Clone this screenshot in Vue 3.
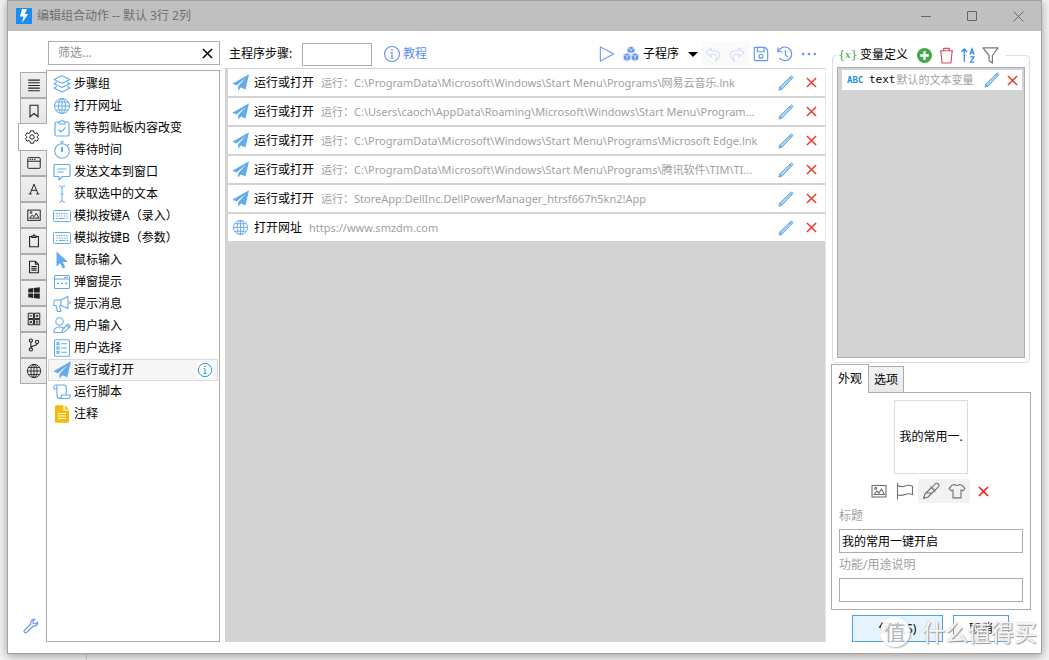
<script setup>
import { ref } from 'vue'

const rail = ['lines', 'bookmark', 'gear', 'window', 'letter', 'image', 'clipboard', 'doc', 'windows', 'calc', 'branch', 'globe']
const railNames = ['全部', '收藏', '常用', '窗口', '文本', '图片', '剪贴板', '文件', '系统', '计算', '流程', '网络']
const activeRail = ref(2)

const modules = [
  { icon: 'layers', name: '步骤组' },
  { icon: 'globe', name: '打开网址' },
  { icon: 'clipcheck', name: '等待剪贴板内容改变' },
  { icon: 'timer', name: '等待时间' },
  { icon: 'message', name: '发送文本到窗口' },
  { icon: 'ibeam', name: '获取选中的文本' },
  { icon: 'keyboard', name: '模拟按键A（录入）' },
  { icon: 'keyboard', name: '模拟按键B（参数）' },
  { icon: 'cursor', name: '鼠标输入' },
  { icon: 'dialog', name: '弹窗提示' },
  { icon: 'horn', name: '提示消息' },
  { icon: 'useredit', name: '用户输入' },
  { icon: 'listbox', name: '用户选择' },
  { icon: 'plane', name: '运行或打开' },
  { icon: 'scroll', name: '运行脚本' },
  { icon: 'note', name: '注释' }
]
const activeModule = ref(13)

const steps = ref([
  { icon: 'plane', name: '运行或打开', detail: '运行：C:\\ProgramData\\Microsoft\\Windows\\Start Menu\\Programs\\网易云音乐.lnk' },
  { icon: 'plane', name: '运行或打开', detail: '运行：C:\\Users\\caoch\\AppData\\Roaming\\Microsoft\\Windows\\Start Menu\\Program...' },
  { icon: 'plane', name: '运行或打开', detail: '运行：C:\\ProgramData\\Microsoft\\Windows\\Start Menu\\Programs\\Microsoft Edge.lnk' },
  { icon: 'plane', name: '运行或打开', detail: '运行：C:\\ProgramData\\Microsoft\\Windows\\Start Menu\\Programs\\腾讯软件\\TIM\\TI...' },
  { icon: 'plane', name: '运行或打开', detail: '运行：StoreApp:DellInc.DellPowerManager_htrsf667h5kn2!App' },
  { icon: 'globe', name: '打开网址', detail: 'https://www.smzdm.com' }
])

const filter = ref('')
const stepName = ref('')
const title = ref('我的常用一键开启')
const usage = ref('')
</script>

<template>
  <svg class="defs" aria-hidden="true">
    <defs>
      <g id="i-lines" fill="none" stroke="currentColor" stroke-width="1.2"><path d="M2.500 3.500h13M2.500 6.500h13M2.500 9.500h13M2.500 12.500h13M2.500 15.500h13" /></g>
      <g id="i-bookmark" fill="none" stroke="currentColor" stroke-width="1.2"><path d="M4.5 2.5h9v13L9 11.8l-4.5 3.7z" /></g>
      <g id="i-gear" fill="none" stroke="currentColor" stroke-width="1.1" stroke-linejoin="round"><path d="M7.3 2h3.400l.5 2.200 1.300.8 2.200-.7 1.700 2.900-1.700 1.500v.6l1.700 1.500-1.700 2.900-2.200-.7-1.300.8-.5 2.200H7.300l-.5-2.200-1.300-.8-2.200.7-1.700-2.900 1.700-1.500v-.6L1.600 7.200l1.700-2.900 2.200.7 1.300-.8z" /><circle cx="9" cy="9" r="2.500" /></g>
      <g id="i-window" fill="none" stroke="currentColor" stroke-width="1.1"><rect x="2" y="3" width="14" height="12" rx="1" /><path d="M2 7h14M4 5h1.500M6.500 5H8M9 5h1.500" /></g>
      <g id="i-letter" fill="none" stroke="currentColor" stroke-width="1.1"><path d="M4.500 14.500L9 3.500l4.500 11M6 10.500h6M3 14.500h3.500M11.500 14.500H15" /></g>
      <g id="i-image" fill="none" stroke="currentColor" stroke-width="1.100"><rect x="2" y="3.500" width="14" height="11.500" /><path d="M4 12.500L7 9l2 2 2.500-4 3 5.500z" /><circle cx="5.700" cy="6.200" r="1" /></g>
      <g id="i-clipboard" fill="none" stroke="currentColor" stroke-width="1.200"><path d="M6.500 4h-2.500v11.500h10V4h-2.500" /><path d="M6.500 5V3.500H8L9 2l1 1.500h1.500V5z" /></g>
      <g id="i-doc" fill="none" stroke="currentColor" stroke-width="1.200"><path d="M4 2.500h6.500L14 6v9.500H4zM10.500 2.500V6H14M6 8.500h6M6 10.500h6M6 12.500h6" /></g>
      <g id="i-windows" fill="currentColor"><path d="M2.500 4.300l5.500-.8v5H2.500zM8.800 3.400L15.500 2.500v6H8.800zM2.500 9.500H8v5l-5.500-.8zM8.800 9.500h6.700v6l-6.700-.900z" /></g>
      <g id="i-calc" fill="none" stroke="currentColor" stroke-width="1.100"><path d="M2.500 2.500h6v6h-6zM9.500 2.500h6v6h-6zM2.500 9.500h6v6h-6zM9.500 9.500h6v6h-6zM4 5.500h3M11 5.500h3M12.500 4v3M4 11l3 3M7 11l-3 3M11 11.500h3M11 13.500h3" /></g>
      <g id="i-branch" fill="none" stroke="currentColor" stroke-width="1.200"><circle cx="5.500" cy="4" r="1.800" /><circle cx="5.500" cy="14" r="1.800" /><circle cx="12.500" cy="5.500" r="1.800" /><path d="M5.500 6v6M12.500 7.500c0 3-7 1.500-7 4.500" /></g>
      <g id="i-globe" fill="none" stroke="currentColor" stroke-width="1"><circle cx="9" cy="9" r="7.500" /><ellipse cx="9" cy="9" rx="3.500" ry="7.500" /><path d="M9 1.500v15M1.500 9h15M2.800 5h12.400M2.800 13h12.400" /></g>
      <g id="i-layers" fill="none" stroke="currentColor" stroke-width="1.100" stroke-linejoin="round"><path d="M9 .8l8 3.700-8 3.700-8-3.700zM3.800 7.200L1 8.700l8 3.800 8-3.800-2.800-1.500M3.800 11.400L1 13l8 4 8-4-2.800-1.600" /></g>
      <g id="i-clipcheck" fill="none" stroke="currentColor" stroke-width="1.200"><path d="M6 3H3.500q-1.500 0-1.500 1.500v11q0 1.500 1.500 1.500h11q1.500 0 1.500-1.500v-11Q16 3 14.500 3H12M6 5V2.500h1.500Q9-.5 10.500 2.500H12V5zM5.500 10.500L8 13l4.500-4.500" /></g>
      <g id="i-timer" fill="none" stroke="currentColor" stroke-width="1.100"><circle cx="9" cy="10" r="7.300" /><path d="M7 .7h4M9 .7v2M14.500 4.500l1.300-1.300M9 6v5" /><path d="M9 6v5" stroke-width="2" /></g>
      <g id="i-message" fill="none" stroke="currentColor" stroke-width="1.200" stroke-linejoin="round"><path d="M2 1.500h14q1 0 1 1v10q0 1-1 1H9.500L6 17v-3.500H2q-1 0-1-1v-10q0-1 1-1zM4.500 6h9M4.500 9h6" /></g>
      <g id="i-ibeam" fill="none" stroke="currentColor" stroke-width="1"><path d="M6 .8q3 0 3 2 0-2 3-2M6 17.200q3 0 3-2 0 2 3 2M9 3v12M7.500 9h3" /></g>
      <g id="i-keyboard" fill="none" stroke="currentColor" stroke-width="1"><rect x=".5" y="3.500" width="17" height="11" rx="1" /><path d="M3 6.500h12M3.500 9h12" stroke-dasharray="1.500 1" /><path d="M3 11.500h1.500M6 11.500h6M13.500 11.500H15" /></g>
      <g id="i-cursor" fill="currentColor"><path d="M3.500.5v15l3.700-3.300 2.500 5.300 2.600-1.200-2.400-5.200h5z" /></g>
      <g id="i-dialog" fill="none" stroke="currentColor" stroke-width="1.100"><rect x="1.500" y="2.500" width="15" height="13" rx="1" /><path d="M1.500 6h15" /><path d="M4 10.500h2M8 10.500h2M12 10.500h2" stroke-width="1.500" /><path d="M11 4.300h4" /></g>
      <g id="i-horn" fill="none" stroke="currentColor" stroke-width="1.100" stroke-linejoin="round"><path d="M1 5h7l7-3.500v12L8 10.500H6.500L8 16.500H4.500L3 10.500H1zM8 5v5.500M17 6v3" /></g>
      <g id="i-useredit" fill="none" stroke="currentColor" stroke-width="1.100" stroke-linejoin="round"><circle cx="6.500" cy="4.500" r="3.700" /><path d="M9 15.500H1q-.5-5.500 5.500-5.500 2.500 0 4 1M9 15.500l.5-3L15 7l2.300 2.300-5.600 5.500zM13.700 8.300l2.300 2.200" /></g>
      <g id="i-listbox" fill="none" stroke="currentColor" stroke-width="1.100"><rect x="1.500" y=".8" width="15" height="16.400" rx="1" /><path d="M8 4.700h6M8 9h6M8 13.300h6" /><rect x="4" y="3.700" width="2" height="2" /><rect x="4" y="8" width="2" height="2" /><rect x="4" y="12.300" width="2" height="2" /></g>
      <g id="i-plane" fill="currentColor"><path d="M18 .3L.3 10.300l4.500 2L14.700 4 6.500 13v4.700l2.800-3.400 5 2z" /></g>
      <g id="i-scroll" fill="none" stroke="currentColor" stroke-width="1.100" stroke-linejoin="round"><path d="M4 6H.8V4Q.8 2 2.500 2H11q2.200 0 2.200 2.500V12M2.500 2Q4 2 4 4v8.500Q4 15.500 6.500 15.500H15q2.300 0 2.300-3.500H8.500q0 3.500-2 3.500" /></g>
      <g id="i-note"><path d="M3 .3h7.500v5.200H16v11.200q0 1-1 1H3q-1 0-1-1V1.300q0-1 1-1z" fill="#f5ba0c" /><path d="M11.700.3L16 4.400h-4.300z" fill="#f5ba0c" /><path d="M5 8.500h8M5 11h8M5 13.500h8" stroke="#fff" stroke-width="1.100" /></g>
      <g id="i-info" fill="none" stroke="currentColor" stroke-width="1.100"><circle cx="9" cy="9" r="7.500" /><path d="M7.500 7.500H9V13M7.500 13h3" /><path d="M8.300 5h1.400" stroke-width="1.500" /></g>
      <g id="i-wrench" fill="none" stroke="currentColor" stroke-width="1.300" stroke-linejoin="round"><path d="M13.500 1.500q-2-.5-3.700 1-1.500 1.600-.8 4L1.700 13.700q-1 1.300 0 2.500 1.300 1 2.600 0L11.500 9q2.500.6 4-1 1.400-1.600 1-3.500L14 6.800 11.500 6.200 11 3.900z" /></g>
      <g id="i-pencil" stroke="#4a8dc2" stroke-width=".8" stroke-linejoin="round"><path d="M1 17l1-3.500L14.500 1.500q.8-.6 1.600.2t.3 1.700L4.500 16z" fill="#a3d4fb" /><path d="M13 3l2 2M2 13.500L4.500 16" fill="none" /></g>
      <g id="i-cross" fill="none" stroke="currentColor" stroke-width="1.800"><path d="M3.500 3.500l11 11M14.500 3.500l-11 11" /></g>
      <g id="i-play" fill="none" stroke="currentColor" stroke-width="1.200" stroke-linejoin="round"><path d="M1.500 1v16L16.500 9z" /></g>
      <g id="i-cubes" stroke="#fff" stroke-width=".7" stroke-linejoin="round" fill="currentColor"><path d="M9 .3l4.300 1.900v4.600L9 8.700 4.700 6.800V2.200zM4.500 7.800l4.200 1.900v5.300l-4.200 2.300-4.200-2.300V9.700zM13.500 7.800l4.200 1.900v5.300l-4.200 2.300-4.200-2.300V9.700z" /><path d="M4.700 2.200L9 4.200l4.300-2M9 4.200v4.500M.3 9.700l4.200 2 4.200-2M4.500 11.700v5.500M9.300 9.700l4.200 2 4.200-2M13.500 11.700v5.500" fill="none" /></g>
      <g id="i-undo" fill="none" stroke="currentColor" stroke-width="1.200" stroke-linejoin="round"><path d="M7 2L1 7.300l6 5.200V9.300q5-.5 6.200 2 .8 2.200-1.700 5.200 5-2.500 5-6.500 0-5-9.500-5z" /></g>
      <g id="i-redo" fill="none" stroke="currentColor" stroke-width="1.200" stroke-linejoin="round"><path d="M11 2l6 5.300-6 5.200V9.300q-5-.5-6.200 2Q4 13.500 6.500 16.500q-5-2.500-5-6.500 0-5 9.500-5z" /></g>
      <g id="i-save" fill="none" stroke="currentColor" stroke-width="1.300" stroke-linejoin="round"><path d="M2.500 1.500h11l3 3v11q0 1-1 1h-13q-1 0-1-1v-13q0-1 1-1zM5 1.500v5h7.500v-5" /><circle cx="9" cy="11.500" r="2.200" /></g>
      <g id="i-history" fill="none" stroke="currentColor" stroke-width="1.300"><path d="M1 1.500v5h5M1.500 6.300a7.700 7.700 0 1 1 1 7M9.500 4.500v5.500l3 2.500" /></g>
      <g id="i-dots" fill="currentColor"><circle cx="2.500" cy="9" r="1.500" /><circle cx="9" cy="9" r="1.500" /><circle cx="15.500" cy="9" r="1.500" /></g>
      <g id="i-plus"><circle cx="9" cy="9" r="8" fill="#43a948" /><path d="M9 4.500v9M4.500 9h9" stroke="#fff" stroke-width="2.600" /></g>
      <g id="i-trash" fill="none" stroke="currentColor" stroke-width="1.200" stroke-linejoin="round"><path d="M2 4h14M6 4V1.500h6V4M3 4l1.300 13h9.400L15 4" /></g>
      <g id="i-sort" fill="none" stroke="currentColor" stroke-width="1.300"><path d="M4.500 16V2M1.500 5.300L4.500 2l3 3.300M10.500 8l2.200-6 2.200 6M11.300 6h3M10.800 10.500h4L11 16h4" /></g>
      <g id="i-funnel" fill="none" stroke="currentColor" stroke-width="1.300" stroke-linejoin="round"><path d="M1 1h16l-6 8v8l-3.500-2.500V9z" /></g>
      <g id="i-flag" fill="none" stroke="currentColor" stroke-width="1.100"><path d="M1.500 1v16.500M1.500 3.500q4 2 7.500.5t7.500.2v8.300q-3.500-1.500-7.500 0t-7.500.3" /></g>
      <g id="i-dropper" fill="none" stroke="currentColor" stroke-width="1.100" stroke-linejoin="round"><path d="M8.500 4.500l5 5M10 5.500L13 2q1.700-1.500 3.300 0 1.400 1.400-.1 3.200L12.700 8.300M9.500 5.500L3 12l-1.500 4.500L6 15l6.500-6.500M5 11h5" /></g>
      <g id="i-shirt" fill="none" stroke="currentColor" stroke-width="1.100" stroke-linejoin="round"><path d="M6.500 2.500q2.500 2 5 0L14 3.200l3 3.500-2.300 2.200-1.700-1v8H5v-8l-1.700 1L1 6.700l3-3.500z" /></g>
    </defs>
  </svg>

  <div class="desktop">
    <main class="win">
      <header class="titlebar">
        <span class="logo"><svg viewBox="0 0 16 16"><path d="M6 1h5L8.800 6H12L6 15l1.500-6.500H4z" fill="#fff" /></svg></span>
        <h1>编辑组合动作 -- 默认 3行 2列</h1>
        <div class="winbtns">
          <button aria-label="最小化"><svg viewBox="0 0 11 11"><path d="M0 5.500h10" /></svg></button>
          <button aria-label="最大化"><svg viewBox="0 0 11 11"><path d="M.5.5h9v9h-9z" /></svg></button>
          <button aria-label="关闭"><svg viewBox="0 0 11 11"><path d="M.5.5l10 10M10.500.5l-10 10" /></svg></button>
        </div>
      </header>

      <div class="content">
        <section class="left">
          <div class="filter">
            <input v-model="filter" type="text" placeholder="筛选..." aria-label="筛选">
            <button aria-label="清除" @click="filter = ''"><svg class="ic" viewBox="0 0 18 18"><use href="#i-cross" /></svg></button>
          </div>
          <div class="browser">
            <nav class="rail">
              <button v-for="(r, i) in rail" :key="r" :class="{ on: i === activeRail }" :aria-label="railNames[i]" @click="activeRail = i">
                <svg class="ic" viewBox="0 0 18 18"><use :href="'#i-' + r" /></svg>
              </button>
              <button class="tool" aria-label="设置"><svg class="ic" viewBox="0 0 18 18"><use href="#i-wrench" /></svg></button>
            </nav>
            <ul class="modules">
              <li v-for="(m, i) in modules" :key="m.name" :class="{ on: i === activeModule }" @click="activeModule = i">
                <svg class="ic" viewBox="0 0 18 18"><use :href="'#i-' + m.icon" /></svg>
                <span>{{ m.name }}</span>
                <button v-if="i === activeModule" class="help" aria-label="说明"><svg class="ic" viewBox="0 0 18 18"><use href="#i-info" /></svg></button>
              </li>
            </ul>
          </div>
        </section>

        <section class="center">
          <div class="toolbar">
            <label for="step-name">主程序步骤:</label>
            <input id="step-name" v-model="stepName" type="text">
            <a href="#"><svg class="ic" viewBox="0 0 18 18"><use href="#i-info" /></svg>教程</a>
            <div class="actions">
              <button class="play" aria-label="运行"><svg class="ic" viewBox="0 0 18 18"><use href="#i-play" /></svg></button>
              <button class="sub"><svg class="ic" viewBox="0 0 18 18"><use href="#i-cubes" /></svg>子程序<i class="caret"></i></button>
              <button class="off" disabled aria-label="撤销"><svg class="ic" viewBox="0 0 18 18"><use href="#i-undo" /></svg></button>
              <button class="off" disabled aria-label="重做"><svg class="ic" viewBox="0 0 18 18"><use href="#i-redo" /></svg></button>
              <button aria-label="保存"><svg class="ic" viewBox="0 0 18 18"><use href="#i-save" /></svg></button>
              <button aria-label="历史"><svg class="ic" viewBox="0 0 18 18"><use href="#i-history" /></svg></button>
              <button aria-label="更多"><svg class="ic" viewBox="0 0 18 18"><use href="#i-dots" /></svg></button>
            </div>
          </div>
          <ul class="steps">
            <li v-for="(s, i) in steps" :key="i">
              <svg class="ic" viewBox="0 0 18 18"><use :href="'#i-' + s.icon" /></svg>
              <b>{{ s.name }}</b>
              <span class="detail">{{ s.detail }}</span>
              <button aria-label="编辑"><svg class="ic" viewBox="0 0 18 18"><use href="#i-pencil" /></svg></button>
              <button class="del" aria-label="删除" @click="steps.splice(i, 1)"><svg class="ic" viewBox="0 0 18 18"><use href="#i-cross" /></svg></button>
            </li>
          </ul>
        </section>

        <section class="right">
          <fieldset class="vars">
            <legend>
              <span class="braces">{<em>x</em>}</span>
              <span class="vname">变量定义</span>
              <button aria-label="添加"><svg class="ic" viewBox="0 0 18 18"><use href="#i-plus" /></svg></button>
              <button class="red" aria-label="删除全部"><svg class="ic" viewBox="0 0 18 18"><use href="#i-trash" /></svg></button>
              <button class="blue" aria-label="排序"><svg class="ic" viewBox="0 0 18 18"><use href="#i-sort" /></svg></button>
              <button class="gray" aria-label="筛选变量"><svg class="ic" viewBox="0 0 18 18"><use href="#i-funnel" /></svg></button>
            </legend>
            <div class="varlist">
              <div class="var">
                <span class="abc">ABC</span>
                <code>text</code>
                <span class="desc">默认的文本变量</span>
                <button aria-label="编辑"><svg class="ic" viewBox="0 0 18 18"><use href="#i-pencil" /></svg></button>
                <button class="del" aria-label="删除"><svg class="ic" viewBox="0 0 18 18"><use href="#i-cross" /></svg></button>
              </div>
            </div>
          </fieldset>

          <div class="tabs" role="tablist">
            <button class="on" role="tab" aria-selected="true">外观</button>
            <button role="tab" aria-selected="false">选项</button>
          </div>
          <div class="panel">
            <div class="preview">我的常用一.</div>
            <div class="looks">
              <button aria-label="图片"><svg class="ic" viewBox="0 0 18 18"><use href="#i-image" /></svg></button>
              <button aria-label="旗帜"><svg class="ic" viewBox="0 0 18 18"><use href="#i-flag" /></svg></button>
              <button class="shade" aria-label="取色"><svg class="ic" viewBox="0 0 18 18"><use href="#i-dropper" /></svg></button>
              <button class="shade" aria-label="皮肤"><svg class="ic" viewBox="0 0 18 18"><use href="#i-shirt" /></svg></button>
              <button class="del" aria-label="清除图标"><svg class="ic" viewBox="0 0 18 18"><use href="#i-cross" /></svg></button>
            </div>
            <label for="f-title">标题</label>
            <input id="f-title" v-model="title" type="text">
            <label for="f-usage">功能/用途说明</label>
            <input id="f-usage" v-model="usage" type="text">
          </div>
          <footer class="buttons">
            <button class="primary">保存(S)</button>
            <button>取消</button>
          </footer>
        </section>
      </div>
    </main>
    <div class="mark"><span class="seal">值</span><span>什么值得买</span></div>
  </div>
</template>

<style>
body {
  background: #f3f3f3;
}
</style>

<style scoped>
* {
  box-sizing: border-box;
}
.desktop {
  position: relative;
  display: flex;
  min-height: 100vh;
  padding: 0 7px 6px;
  overflow: hidden;
  background: linear-gradient(#cfcfcf, #cfcfcf) 86px 100% / 1px 6px no-repeat, #f3f3f3;
  font: 12px/16px "Noto Sans", "Noto Sans CJK SC", sans-serif;
  color: #000;
}
.defs {
  position: absolute;
  width: 0;
  height: 0;
}
.ic {
  display: block;
  flex: none;
  width: 18px;
  height: 18px;
}
button {
  display: flex;
  align-items: center;
  justify-content: center;
  padding: 0;
  border: 0;
  background: none;
  color: inherit;
  font: inherit;
}
input {
  min-width: 0;
  padding: 0 2px;
  border: 1px solid #abadb3;
  background: #fff;
  color: #000;
  font: inherit;
  outline: 0;
}
ul {
  margin: 0;
  padding: 0;
  list-style: none;
}
.win {
  flex: 1;
  display: flex;
  flex-direction: column;
  min-width: 0;
  border: 1px solid #a2a2a2;
  background: #fff;
  box-shadow: 0 2px 9px rgba(0, 0, 0, 0.35);
}
.titlebar {
  display: flex;
  align-items: center;
  height: 30px;
  padding-left: 8px;
  background: #c0c0c0;
}
.logo {
  width: 16px;
  height: 16px;
  background: #1b8df0;
}
.logo svg {
  display: block;
}
h1 {
  margin: 0 0 0 5px;
  color: #6f6f6f;
  font-size: 12px;
  font-weight: 400;
}
.winbtns {
  display: flex;
  margin-left: auto;
}
.winbtns button {
  width: 46px;
  height: 28px;
}
.winbtns svg {
  width: 11px;
  height: 11px;
  fill: none;
  stroke: #666;
}
.content {
  flex: 1;
  display: grid;
  grid-template-columns: 200px minmax(0, 1fr) 200px;
  gap: 5px;
  padding: 10px 10px 11px 12px;
}
.left,
.center,
.right {
  display: flex;
  flex-direction: column;
  min-width: 0;
}
.filter {
  display: flex;
  height: 24px;
  margin: 0 0 5px 28px;
  border: 1px solid #abadb3;
}
.filter input {
  flex: 1;
  padding: 0 9px;
  border: 0;
}
.filter input::placeholder {
  color: #8f8f8f;
  opacity: 1;
}
.filter button {
  width: 23px;
}
.filter .ic {
  width: 15px;
  height: 15px;
}
.browser {
  flex: 1;
  display: flex;
}
.rail {
  display: flex;
  flex-direction: column;
  width: 26px;
  padding-top: 2px;
}
.rail button {
  width: 26px;
  height: 26px;
  border: 1px solid #acacac;
  border-right: 0;
  background: linear-gradient(#f0f0f0, #e6e6e6);
  color: #222;
}
.rail button.on {
  z-index: 1;
  width: 29px;
  height: 28px;
  margin: -1px 0 -1px -2px;
  padding-right: 2px;
  background: #fff;
}
.rail .ic {
  width: 16px;
  height: 16px;
}
.rail .tool {
  margin-top: auto;
  margin-bottom: 3px;
  width: 22px;
  border: 0;
  background: none;
  color: #6495ed;
}
.modules {
  flex: 1;
  min-width: 0;
  padding: 2px 1px;
  border: 1px solid #acacac;
}
.modules li {
  display: flex;
  align-items: center;
  height: 22px;
  padding: 0 4px;
  border: 1px solid transparent;
}
.modules li.on {
  border-color: #dadada;
  background: #f6f6f6;
}
.modules .ic {
  color: #64abec;
}
.modules span {
  margin-left: 3px;
  white-space: nowrap;
}
.modules .help {
  margin-left: auto;
  background: #fff;
}
.modules .help .ic {
  width: 16px;
  height: 16px;
  color: #1e96dc;
}
.toolbar {
  display: flex;
  align-items: center;
  height: 26px;
  padding-left: 4px;
}
.toolbar label {
  width: 73px;
  white-space: nowrap;
}
.toolbar input {
  width: 70px;
  height: 23px;
}
.toolbar a {
  display: flex;
  align-items: center;
  gap: 2px;
  margin-left: 11px;
  color: #5b8def;
  text-decoration: none;
}
.actions {
  display: flex;
  align-items: center;
  margin-left: auto;
  padding-right: 5px;
}
.actions button {
  width: 24px;
  height: 24px;
  color: #6495ed;
}
.actions .ic {
  width: 16px;
  height: 16px;
}
.actions .sub {
  gap: 4px;
  width: 75px;
  margin: 0 3px 0 4px;
  color: #000;
  white-space: nowrap;
}
.actions .sub .ic {
  color: #6495ed;
}
.caret {
  margin-left: 5px;
  border: 5px solid transparent;
  border-top-color: #000;
  border-bottom: 0;
}
.actions .off {
  background: #fafafa;
  color: #d3dff8;
}
.steps {
  flex: 1;
  display: flex;
  flex-direction: column;
  gap: 2px;
  margin-top: 1px;
  padding: 1px 0 0 3px;
  border-right: 1px solid #e8e8e8;
  background: #d3d3d3;
}
.steps li {
  display: flex;
  align-items: center;
  height: 27px;
  padding: 0 4px;
  background: #fff;
  white-space: nowrap;
}
.steps li > .ic {
  width: 17px;
  height: 17px;
  color: #64abec;
}
.steps b {
  margin: 0 7px 0 5px;
  font-weight: 400;
}
.detail {
  flex: 1;
  overflow: hidden;
  color: #9f9f9f;
  font-size: 11px;
  text-overflow: ellipsis;
}
.steps button {
  width: 20px;
  margin-left: 5px;
}
.del {
  color: #f03a2e;
}
.steps button .ic,
.var button .ic {
  width: 16px;
  height: 16px;
}
.steps .del .ic,
.var .del .ic,
.looks .del .ic {
  width: 15px;
  height: 15px;
}
.vars {
  flex: 1;
  display: flex;
  min-width: 0;
  margin: 3px 1px 0;
  padding: 1px 4px 4px;
  border: 1px solid #d5dfe5;
  border-radius: 4px;
}
legend {
  display: flex;
  align-items: center;
  height: 22px;
  padding: 0 5px 0 1px;
}
.braces {
  width: 22px;
  color: #1f9d2c;
  font: 11px/16px "DejaVu Serif", serif;
}
.braces em {
  font-size: 10px;
}
.vname {
  margin-right: 5px;
  white-space: nowrap;
}
legend button {
  width: 22px;
}
legend .ic {
  width: 17px;
  height: 17px;
}
.red {
  color: #dc4a5c;
}
.blue {
  color: #2d8bef;
}
.gray {
  color: #777;
}
.varlist {
  flex: 1;
  min-width: 0;
  padding: 2px 2px 2px 4px;
  border: 1px solid #abadb3;
  background: #d3d3d3;
}
.var {
  display: flex;
  align-items: center;
  height: 20px;
  padding-left: 5px;
  background: #fff;
  white-space: nowrap;
}
.abc {
  width: 22px;
  color: #1b90d8;
  font: bold 9px/16px "DejaVu Sans Mono", monospace;
}
code {
  font: 11px/16px "DejaVu Sans Mono", monospace;
}
.desc {
  flex: 1;
  margin-left: 1px;
  color: #9f9f9f;
  font-size: 11px;
}
.var button {
  width: 20px;
}
.tabs {
  display: flex;
  align-items: flex-end;
  height: 29px;
  margin: 1px 0 -1px;
}
.tabs button {
  width: 35px;
  height: 27px;
  border: 1px solid #acacac;
  border-left: 0;
  background: linear-gradient(#f2f2f2, #e8e8e8);
}
.tabs .on {
  z-index: 1;
  width: 38px;
  height: 29px;
  border-left: 1px solid #acacac;
  border-bottom: 0;
  background: #fff;
}
.panel {
  display: flex;
  flex-direction: column;
  padding: 7px;
  border: 1px solid #acacac;
}
.preview {
  display: flex;
  align-items: center;
  align-self: center;
  justify-content: center;
  width: 74px;
  height: 74px;
  border: 1px solid #dcdcdc;
  white-space: nowrap;
}
.looks {
  display: flex;
  justify-content: center;
  margin: 5px 0 4px;
  color: #707070;
}
.looks button {
  width: 26px;
  height: 24px;
}
.looks .shade {
  background: #f2f2f2;
}
.looks .del {
  color: #f21414;
}
.panel label {
  height: 22px;
  color: #9f9f9f;
  line-height: 18px;
}
.panel label + input {
  height: 24px;
  margin-bottom: 3px;
}
.panel input:last-child {
  margin-bottom: 0;
}
.buttons {
  display: flex;
  gap: 10px;
  margin: 5px 0 0 21px;
}
.buttons button {
  width: 56px;
  height: 27px;
  border: 1px solid #4f9fe3;
}
.buttons .primary {
  width: 91px;
  background: #e6f4ff;
}
.mark {
  position: absolute;
  right: 12px;
  bottom: 13px;
  display: flex;
  align-items: center;
  gap: 12px;
  color: rgba(255, 255, 255, 0.9);
  font-size: 23px;
  line-height: 30px;
  text-shadow: 1px 1px 1px #999, 0 0 2px #bbb;
  pointer-events: none;
}
.seal {
  width: 30px;
  height: 30px;
  border-radius: 50%;
  background: rgba(255, 255, 255, 0.9);
  box-shadow: 1px 1px 2px #aaa;
  color: #b4b8bc;
  font-size: 21px;
  text-align: center;
  text-shadow: none;
}
</style>
